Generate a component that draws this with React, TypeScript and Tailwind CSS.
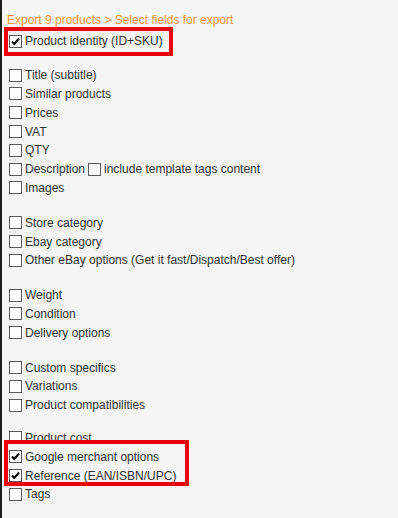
import React from "react";

type Field = { label: string; checked?: boolean; extra?: string };

const groups: Field[][] = [
  [{ label: "Product identity (ID+SKU)", checked: true }],
  [
    { label: "Title (subtitle)" },
    { label: "Similar products" },
    { label: "Prices" },
    { label: "VAT" },
    { label: "QTY" },
    { label: "Description", extra: "include template tags content" },
    { label: "Images" },
  ],
  [
    { label: "Store category" },
    { label: "Ebay category" },
    { label: "Other eBay options (Get it fast/Dispatch/Best offer)" },
  ],
  [{ label: "Weight" }, { label: "Condition" }, { label: "Delivery options" }],
  [
    { label: "Custom specifics" },
    { label: "Variations" },
    { label: "Product compatibilities" },
  ],
  [
    { label: "Product cost" },
    { label: "Google merchant options", checked: true },
    { label: "Reference (EAN/ISBN/UPC)", checked: true },
    { label: "Tags" },
  ],
];

const gaps = ["", "mt-[15px]", "mt-[16px]", "mt-[16px]", "mt-[16px]", "mt-[14px]"];

const Box = ({ checked }: { checked?: boolean }) => (
  <span className="relative inline-block w-[13px] h-[13px] shrink-0 border border-[#5a5a5a] bg-white">
    {checked && (
      <svg viewBox="0 0 11 11" className="absolute left-0 top-0 w-[11px] h-[11px]">
        <path d="M2 5.5 L4.3 8 L9 2.5" fill="none" stroke="#000" strokeWidth="2" />
      </svg>
    )}
  </span>
);

const Row = ({ field }: { field: Field }) => (
  <div className="flex items-center h-[18.8px] pl-[7px]">
    <Box checked={field.checked} />
    <span className="ml-[3px]">{field.label}</span>
    {field.extra && (
      <>
        <span className="ml-[3px]" />
        <Box />
        <span className="ml-[3px]">{field.extra}</span>
      </>
    )}
  </div>
);

export default function App() {
  return (
    <div
      className="relative w-[398px] h-[518px] overflow-hidden bg-[#f5f5f5] border-l-2 border-[#1e1e1e] text-[12px] text-[#333]"
      style={{ fontFamily: '"Liberation Sans", Arial, sans-serif' }}
    >
      <div className="pt-[13px] pl-[5px] leading-[15px] text-[#f3973a]">
        Export 9 products &gt; Select fields for export
      </div>
      <div className="mt-[4px]">
        {groups.map((g, i) => (
          <div key={i} className={gaps[i]}>
            {g.map((f) => (
              <Row key={f.label} field={f} />
            ))}
          </div>
        ))}
      </div>

      {/* highlight overlays */}
      <div className="absolute left-[2px] top-[27px] w-[169px] h-[29px] border-4 border-[#e8000b]" />
      <div className="absolute left-[2px] top-[440px] w-[185px] h-[46px] border-4 border-[#e8000b]" />
    </div>
  );
}
